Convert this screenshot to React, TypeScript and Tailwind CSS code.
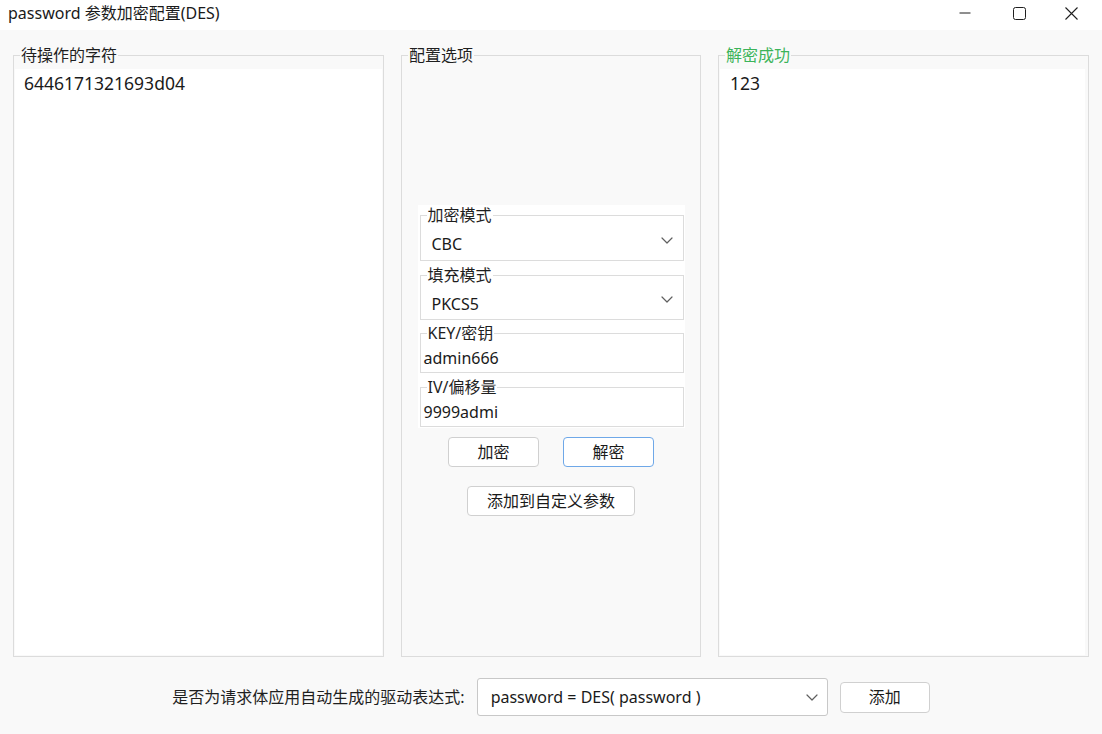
import { useState } from "react";

const font = "font-['Noto_Sans','Noto_Sans_CJK_SC',sans-serif]";

function Chevron() {
    return (
        <svg width="12" height="7" viewBox="0 0 12 7" fill="none" className="shrink-0">
            <path d="M1 1l5 5 5-5" stroke="#5f5f5f" strokeWidth="1.2" strokeLinecap="round" strokeLinejoin="round" />
        </svg>
    );
}

function GroupBox({ title, titleClass = "text-[#1f1f1f]", className = "", children }: { title: string; titleClass?: string; className?: string; children?: React.ReactNode }) {
    return (
        <div className={`relative flex flex-col border border-[#dcdcdc] ${className}`}>
            <span className={`absolute -top-[11px] left-[6px] bg-[#f9f9f9] px-[1px] text-[16px] leading-[20px] ${titleClass}`}>{title}</span>
            {children}
        </div>
    );
}

function Field({ label, value, combo, className = "" }: { label: string; value: string; combo?: boolean; className?: string }) {
    return (
        <div className={`relative ml-[2px] mr-[1px] flex items-center border border-[#dcdcdc] ${combo ? "pl-[11px] pr-[10px]" : "pl-[3px]"} ${className}`}>
            <span className="absolute -top-[11px] left-[6px] bg-white px-[1px] text-[16px] leading-[20px] text-[#1f1f1f]">{label}</span>
            <span className={`flex-1 text-[16px] text-[#1a1a1a] ${combo ? "pt-[12px]" : "pt-[9px]"}`}>{value}</span>
            {combo && <span className="pt-[4px]"><Chevron /></span>}
        </div>
    );
}

function Button({ children, className = "" }: { children: React.ReactNode; className?: string }) {
    return (
        <button className={`flex h-[30px] items-center justify-center rounded-[4px] border bg-white text-[16px] text-[#1a1a1a] ${className}`}>
            {children}
        </button>
    );
}

export default function App() {
    const [source] = useState("6446171321693d04");
    const [result] = useState("123");

    return (
        <div className={`flex h-[734px] w-[1102px] flex-col bg-[#f9f9f9] ${font}`}>
            {/* window title bar */}
            <div className="flex h-[30px] items-center bg-white pl-[8px]">
                <span className="flex-1 pb-[4px] text-[16px] text-[#1a1a1a]">password 参数加密配置(DES)</span>
                <div className="flex items-center pb-[4px]">
                    <span className="flex w-[54px] justify-center">
                        <svg width="12" height="12" viewBox="0 0 12 12"><path d="M0.5 6h11" stroke="#1f1f1f" strokeWidth="1" /></svg>
                    </span>
                    <span className="flex w-[54px] justify-center">
                        <svg width="13" height="13" viewBox="0 0 13 13" fill="none"><rect x="0.5" y="0.5" width="12" height="12" rx="2" stroke="#1f1f1f" strokeWidth="1" /></svg>
                    </span>
                    <span className="flex w-[56px] justify-center pr-[6px]">
                        <svg width="13" height="13" viewBox="0 0 13 13" fill="none"><path d="M0.5 0.5l12 12M12.5 0.5l-12 12" stroke="#1f1f1f" strokeWidth="1.1" /></svg>
                    </span>
                </div>
            </div>

            {/* three panels */}
            <div className="flex gap-[17px] px-[13px] pt-[25px]">
                <GroupBox title="待操作的字符" className="h-[602px] w-[371px]">
                    <div className="mx-[1px] mb-[1px] mt-[13px] flex-1 bg-white pl-[9px] text-[17.5px] leading-[28px] text-[#1a1a1a]">{source}</div>
                </GroupBox>

                <GroupBox title="配置选项" className="h-[602px] w-[300px] items-center">
                    <div className="mt-[149px] flex w-[267px] flex-col bg-white pb-[1px] pt-[10px]">
                        <Field label="加密模式" value="CBC" combo className="h-[46px]" />
                        <Field label="填充模式" value="PKCS5" combo className="mt-[14px] h-[45px]" />
                        <Field label="KEY/密钥" value="admin666" className="mt-[13px] h-[40px]" />
                        <Field label="IV/偏移量" value="9999admi" className="mt-[14px] h-[40px]" />
                    </div>
                    <div className="mt-[9px] flex gap-[24px]">
                        <Button className="w-[91px] border-[#d0d0d0]">加密</Button>
                        <Button className="w-[91px] border-[#6fa8e8]">解密</Button>
                    </div>
                    <Button className="mt-[19px] w-[168px] border-[#d0d0d0]">添加到自定义参数</Button>
                </GroupBox>

                <GroupBox title="解密成功" titleClass="text-[#3cb45a]" className="h-[602px] w-[371px]">
                    <div className="mb-[1px] ml-[1px] mr-[3px] mt-[13px] flex-1 bg-white pl-[10px] text-[17.5px] leading-[28px] text-[#1a1a1a]">{result}</div>
                </GroupBox>
            </div>

            {/* expression row */}
            <div className="mt-[21px] flex h-[38px] items-center justify-center">
                <span className="mr-[12px] text-[16px] text-[#1f1f1f]">是否为请求体应用自动生成的驱动表达式:</span>
                <div className="flex h-[38px] w-[351px] items-center rounded-[3px] border border-[#c8c8c8] bg-white pl-[13px] pr-[9px]">
                    <span className="flex-1 text-[16px] text-[#1a1a1a]">password = DES( password )</span>
                    <Chevron />
                </div>
                <Button className="ml-[12px] h-[31px] w-[90px] border-[#d0d0d0]">添加</Button>
            </div>
        </div>
    );
}
